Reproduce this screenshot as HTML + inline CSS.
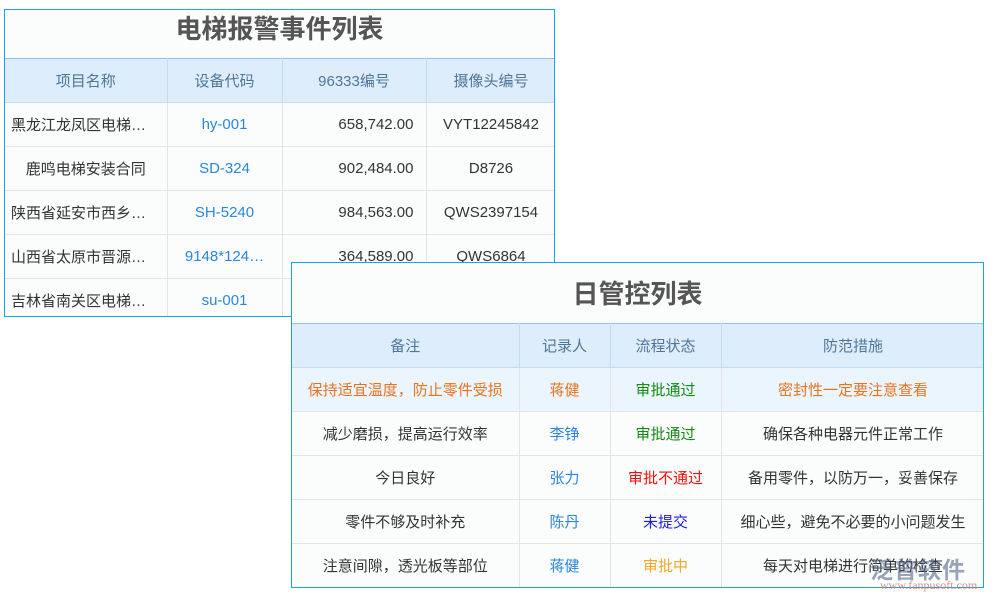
<!DOCTYPE html>
<html><head><meta charset="utf-8"><style>
*{margin:0;padding:0;box-sizing:border-box}
body{width:1000px;height:600px;background:#fff;position:relative;overflow:hidden;font-family:"Liberation Sans","Noto Sans CJK SC",sans-serif;font-size:15px;color:#333}
.box{position:absolute;border:1px solid #1aa3e8;background:#fbfcfc;overflow:hidden}
.title{position:absolute;left:0;right:0;text-align:center;font-weight:bold;color:#555;font-size:26px}
table{position:absolute;left:0;border-collapse:collapse;table-layout:fixed}
td{border:1px solid #e3e6e8;height:44px;text-align:center;white-space:nowrap;overflow:hidden;padding:0 6px}
tr.h td{background:#deedfb;color:#4f7699;border-color:#c7dbee;border-top:1px solid #8cc3ea}
tr td:first-child{border-left:none}
.b{color:#2a86e0}.r{text-align:right;padding-right:12px}.l{text-align:left}
</style></head><body>
<div class="box" style="left:4px;top:9px;width:551px;height:308px">
<div class="title" style="top:0px;line-height:38px">电梯报警事件列表</div>
<table style="top:48px;width:551px">
<colgroup><col style="width:162px"><col style="width:115px"><col style="width:144px"><col style="width:130px"></colgroup>
<tr class="h"><td>项目名称</td><td>设备代码</td><td>96333编号</td><td>摄像头编号</td></tr>
<tr><td class="l">黑龙江龙凤区电梯…</td><td class="b">hy-001</td><td class="r">658,742.00</td><td>VYT12245842</td></tr>
<tr><td>鹿鸣电梯安装合同</td><td class="b">SD-324</td><td class="r">902,484.00</td><td>D8726</td></tr>
<tr><td class="l">陕西省延安市西乡…</td><td class="b">SH-5240</td><td class="r">984,563.00</td><td>QWS2397154</td></tr>
<tr><td class="l">山西省太原市晋源…</td><td class="b">9148*124…</td><td class="r">364,589.00</td><td>QWS6864</td></tr>
<tr><td class="l">吉林省南关区电梯…</td><td class="b">su-001</td><td class="r"></td><td></td></tr>
</table></div>
<div class="box" style="left:291px;top:262px;width:693px;height:326px">
<div class="title" style="top:12px;line-height:38px">日管控列表</div>
<table style="top:60px;width:693px">
<colgroup><col style="width:227px"><col style="width:91px"><col style="width:111px"><col style="width:264px"></colgroup>
<tr class="h"><td>备注</td><td>记录人</td><td>流程状态</td><td>防范措施</td></tr>
<tr style="background:#eaf5fd"><td style="color:#e8731f">保持适宜温度，防止零件受损</td><td style="color:#e8731f">蒋健</td><td style="color:#138a13">审批通过</td><td style="color:#e8731f">密封性一定要注意查看</td></tr>
<tr><td>减少磨损，提高运行效率</td><td class="b">李铮</td><td style="color:#138a13">审批通过</td><td>确保各种电器元件正常工作</td></tr>
<tr><td>今日良好</td><td class="b">张力</td><td style="color:#f01010">审批不通过</td><td>备用零件，以防万一，妥善保存</td></tr>
<tr><td>零件不够及时补充</td><td class="b">陈丹</td><td style="color:#1a1ae6">未提交</td><td>细心些，避免不必要的小问题发生</td></tr>
<tr><td>注意间隙，透光板等部位</td><td class="b">蒋健</td><td style="color:#f5a623">审批中</td><td>每天对电梯进行简单的检查</td></tr>
</table></div>
<div style="position:absolute;left:870px;top:551px;font-size:23px;font-weight:bold;color:rgba(70,90,130,0.55);letter-spacing:1px">泛普软件</div>
<div style="position:absolute;left:880px;top:578px;font-size:12px;font-family:'Liberation Serif',serif;color:rgba(220,110,80,0.75)">www.fanpusoft.com</div>
</body></html>
